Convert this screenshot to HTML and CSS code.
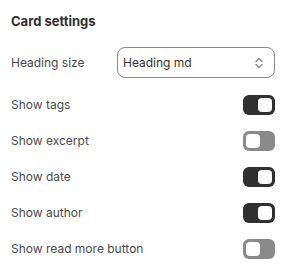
FILE: index.html
```html
<!DOCTYPE html>
<html>
<head>
<meta charset="utf-8">
<link rel="stylesheet" href="styles.css">
</head>
<body>
<div class="panel">
  <h2 class="title">Card settings</h2>
  <div class="field">
    <span class="label">Heading size</span>
    <div class="select">
      <span class="select-value">Heading md</span>
      <svg class="chevron" width="10" height="14" viewBox="0 0 10 14" fill="none" stroke="#8a8a8a" stroke-width="1.4" stroke-linecap="round" stroke-linejoin="round"><path d="M2 5.5 L5 2.5 L8 5.5"/><path d="M2 8.5 L5 11.5 L8 8.5"/></svg>
    </div>
  </div>
  <div class="rows">
    <div class="row"><span class="label">Show tags</span><span class="toggle on"><span class="knob"></span></span></div>
    <div class="row"><span class="label">Show excerpt</span><span class="toggle"><span class="knob"></span></span></div>
    <div class="row"><span class="label">Show date</span><span class="toggle on"><span class="knob"></span></span></div>
    <div class="row"><span class="label">Show author</span><span class="toggle on"><span class="knob"></span></span></div>
    <div class="row"><span class="label">Show read more button</span><span class="toggle"><span class="knob"></span></span></div>
  </div>
</div>
</body>
</html>
```
FILE: styles.css
```css
html, body {
  margin: 0;
  background: #ffffff;
}
body {
  font-family: Inter, "Noto Sans", sans-serif;
  color: #303030;
  font-size: 12px;
}
.panel {
  padding: 11px 21px 0 11px;
}
.title {
  margin: 0;
  font-size: 13px;
  font-weight: 650;
  line-height: 20px;
  color: #303030;
}
.field {
  display: grid;
  grid-template-columns: 106px 1fr;
  align-items: center;
  margin-top: 16px;
}
.label {
  font-size: 12px;
  line-height: 20px;
  color: #4a4a4a;
}
.select {
  height: 31px;
  box-sizing: border-box;
  border: 1px solid #8a8a8a;
  border-radius: 8px;
  display: flex;
  align-items: center;
  justify-content: space-between;
  padding: 0 10px 0 5px;
}
.select-value {
  font-size: 12px;
  color: #303030;
}
.chevron {
  display: block;
}
.rows {
  display: flex;
  flex-direction: column;
  gap: 16px;
  margin-top: 17px;
}
.row {
  display: flex;
  align-items: center;
  justify-content: space-between;
  height: 20px;
}
.toggle {
  width: 32px;
  height: 20px;
  box-sizing: border-box;
  border-radius: 6px;
  background: #8a8a8a;
  padding: 3px;
  display: flex;
  justify-content: flex-start;
}
.toggle.on {
  background: #303030;
  justify-content: flex-end;
}
.knob {
  width: 14px;
  height: 14px;
  border-radius: 4px;
  background: #ffffff;
}
```
